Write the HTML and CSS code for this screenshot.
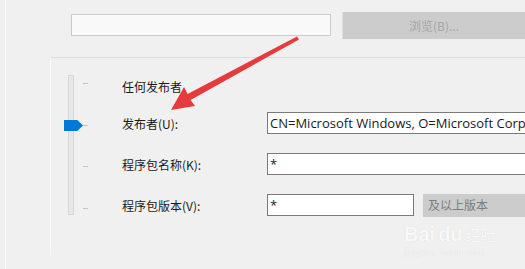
FILE: index.html
```html
<!DOCTYPE html>
<html lang="zh-CN">
<head>
  <meta charset="UTF-8" />
  <meta name="viewport" content="width=device-width, initial-scale=1.0"/>
  <title>程序包发布者规则</title>
  <link rel="stylesheet" href="styles.css">
</head>
<body>

  <div class="frame">
    <div class="top-row">
      <div class="input input-disabled"></div>
      <div class="btn btn-disabled">浏览(B)...</div>
    </div>

    <div class="group">
      <div class="form">
        <div class="track"><div class="thumb"></div></div>

        <div class="tick tick-1"></div>
        <div class="label label-1">任何发布者</div>

        <div class="tick tick-2"></div>
        <div class="label label-2">发布者(U):</div>
        <div class="input field-2">CN=Microsoft Windows, O=Microsoft Corp</div>

        <div class="tick tick-3"></div>
        <div class="label label-3">程序包名称(K):</div>
        <div class="input field-3">*</div>

        <div class="tick tick-4"></div>
        <div class="label label-4">程序包版本(V):</div>
        <div class="version-row field-4">
          <div class="input version-input">*</div>
          <div class="combo">及以上版本</div>
        </div>
      </div>
    </div>
  </div>

  <!-- 标注箭头 -->
  <svg class="arrow" width="525" height="269" viewBox="0 0 525 269">
    <polygon points="171,110 184,87 187.6,94 297,36.5 299,39.5 190.6,100 195,106" fill="#e63a3c"/>
  </svg>

  <!-- 水印 -->
  <div class="watermark">
    <div class="wm-logo"><span>Bai</span><span class="paw">du</span><span class="wm-cn">经验</span></div>
    <div class="wm-url">jingyan.baidu.com</div>
  </div>

</body>
</html>
```

FILE: styles.css
```css
body {
  margin: 0;
  width: 525px;
  height: 269px;
  overflow: hidden;
  position: relative;
  background-color: #f0f0f0;
  font-family: "Noto Sans CJK SC", sans-serif;
  font-size: 12px;
  color: #1a1a1a;
}
.frame {
  margin-left: 5px;
  height: 269px;
  border-left: 1px solid #fbfbfb;
}
.top-row {
  display: flex;
  align-items: flex-start;
  padding-top: 12px;
  padding-left: 65px;
  gap: 11px;
}
.input {
  box-sizing: border-box;
  height: 22px;
  border: 1px solid #7a7a7a;
  background: #fff;
  font-family: "Open Sans", sans-serif;
  font-size: 13px;
  line-height: 20px;
  padding-left: 2px;
  white-space: nowrap;
  overflow: hidden;
}
.input-disabled {
  width: 265px;
  margin-top: 2px;
  border-color: #cbcbcb;
  background: #f9f9f9;
}
.btn {
  flex: none;
  width: 182px;
  height: 27px;
  line-height: 27px;
  text-align: center;
}
.btn-disabled {
  background: #cccccc;
  color: #a6a6a6;
  border-left: 1px solid #dedede;
}
.group {
  margin-top: 18px;
  margin-left: 44px;
  height: 197px;
  border-top: 1px solid #dcdcdc;
  border-left: 1px solid #fafafa;
}
.form {
  display: grid;
  grid-template-columns: 6px 14px 179px 260px;
  grid-template-rows: 22px 22px 22px 22px;
  row-gap: 19px;
  padding-top: 13px;
  padding-left: 17px;
}
.track {
  grid-column: 1;
  grid-row: 1 / 5;
  position: relative;
  margin-top: 4px;
  margin-bottom: 1px;
  box-sizing: border-box;
  border: 1px solid #d6d6d6;
  background: #e7e7e7;
  width: 6px;
}
.thumb {
  position: absolute;
  left: -5px;
  top: 44px;
  width: 19px;
  height: 11px;
  background: #0078d7;
  clip-path: polygon(0 0, 70% 0, 100% 50%, 70% 100%, 0 100%);
}
.tick {
  grid-column: 2;
  align-self: center;
  margin-left: 9px;
  width: 5px;
  height: 1px;
  background: #c4c4c4;
}
.tick-1 { grid-row: 1; margin-top: 2px; }
.tick-2 { grid-row: 2; margin-top: 4px; }
.tick-3 { grid-row: 3; margin-top: 4px; }
.tick-4 { grid-row: 4; margin-top: 6px; }
.label {
  grid-column: 3;
  align-self: center;
  margin-left: 34px;
  line-height: 16px;
  white-space: nowrap;
}
.label-1 { grid-row: 1; margin-top: 10px; }
.label-2 { grid-row: 2; margin-top: 2px; }
.label-3 { grid-row: 3; margin-top: 2px; }
.label-4 { grid-row: 4; margin-top: 2px; }
.field-2 { grid-column: 4; grid-row: 2; }
.field-3 { grid-column: 4; grid-row: 3; }
.field-4 { grid-column: 4; grid-row: 4; }
.version-row {
  display: flex;
  gap: 9px;
}
.version-input {
  flex: none;
  width: 147px;
}
.combo {
  flex: none;
  width: 110px;
  height: 23px;
  line-height: 22px;
  padding-left: 5px;
  box-sizing: border-box;
  background: #cccccc;
  color: #7c7c7c;
}
.arrow {
  position: absolute;
  top: 0;
  left: 0;
  pointer-events: none;
}
.watermark {
  position: absolute;
  left: 404px;
  top: 222px;
  color: rgba(255, 255, 255, 0.85);
  text-shadow: 0 0 1px rgba(0, 0, 0, 0.12);
}
.wm-logo {
  font-family: "Liberation Sans", sans-serif;
  font-weight: bold;
  font-size: 20px;
  line-height: 24px;
  white-space: nowrap;
}
.paw {
  margin-left: 3px;
}
.wm-cn {
  font-family: "Noto Sans CJK SC", sans-serif;
  font-weight: normal;
  font-size: 15px;
  margin-left: 3px;
}
.wm-url {
  font-family: "Liberation Sans", sans-serif;
  font-size: 10px;
  line-height: 12px;
  color: rgba(255, 255, 255, 0.75);
}
```
